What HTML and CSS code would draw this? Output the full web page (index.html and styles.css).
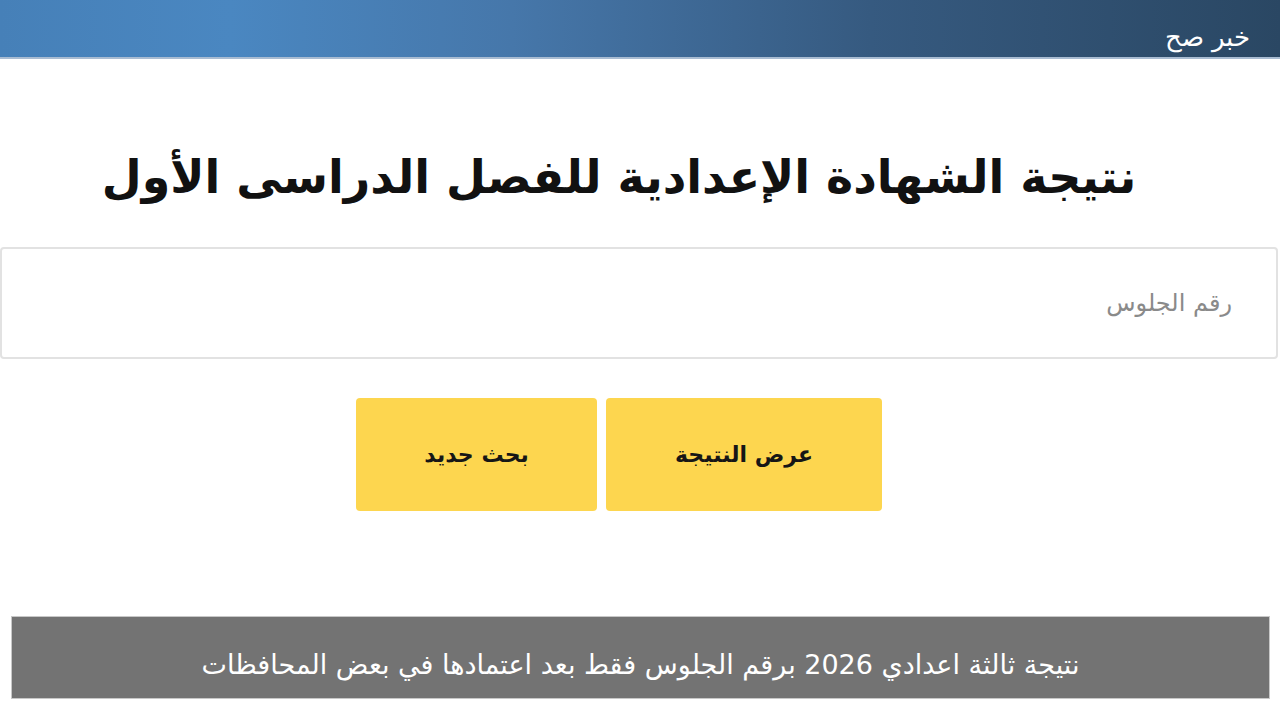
FILE: index.html
```html
<!DOCTYPE html>
<html lang="ar" dir="rtl">
<head>
  <meta charset="UTF-8">
  <meta name="viewport" content="width=device-width, initial-scale=1.0">
  <title>نتيجة الشهادة الإعدادية</title>
  <link rel="stylesheet" href="styles.css">
</head>
<body>
  <header class="topbar">
    <span class="brand">خبر صح</span>
  </header>

  <main class="result-page">
    <h1 class="page-title">نتيجة الشهادة الإعدادية للفصل الدراسى الأول</h1>

    <div class="seat-field">
      <input type="text" class="seat-input" placeholder="رقم الجلوس">
    </div>

    <div class="actions">
      <button class="btn">عرض النتيجة</button>
      <button class="btn btn-new">بحث جديد</button>
    </div>
  </main>

  <footer class="caption">
    <p>نتيجة ثالثة اعدادي 2026 برقم الجلوس فقط بعد اعتمادها في بعض المحافظات</p>
  </footer>
</body>
</html>
```

FILE: styles.css
```css
:root {
  --bar-left: #4a87c1;
  --bar-right: #2a4763;
  --btn-color: #fdd64f;
  --caption-bg: #737373;
}
body {
  margin: 0;
  background: #fff;
  font-family: "DejaVu Sans", "Noto Sans", sans-serif;
  color: #111;
}

/* الشريط العلوي */
.topbar {
  height: 57px;
  border-bottom: 2px solid #a9bcd2;
  background: linear-gradient(90deg, #4680b8 0%, var(--bar-left) 18%, #4677aa 40%, #365a80 68%, var(--bar-right) 100%);
  display: flex;
  align-items: center;
  padding-right: 30px;
  box-sizing: content-box;
}
.brand {
  color: #fff;
  font-size: 26px;
  font-weight: 300;
  margin-top: 16px;
}

/* المحتوى */
.result-page {
  display: flex;
  flex-direction: column;
}
.page-title {
  margin: 82px 42px 0 0;
  text-align: center;
  font-size: 46px;
  font-weight: bold;
  line-height: 72px;
  color: #111;
}
.seat-field {
  margin: 34px 2px 0 0;
}
.seat-input {
  width: 100%;
  box-sizing: border-box;
  height: 112px;
  border: 2px solid #e2e2e2;
  border-radius: 4px;
  padding: 0 44px 0 20px;
  font-family: inherit;
  font-size: 24px;
  direction: rtl;
  outline: none;
}
.seat-input::placeholder {
  color: #8a8a8a;
}
.actions {
  display: flex;
  justify-content: center;
  gap: 9px;
  margin: 39px 42px 0 0;
}
.btn {
  width: 276px;
  height: 113px;
  border: none;
  border-radius: 4px;
  background: var(--btn-color);
  font-family: inherit;
  font-size: 22px;
  font-weight: bold;
  color: #161616;
  cursor: pointer;
}
.btn-new {
  width: 241px;
}

/* الشريط السفلي */
.caption {
  margin: 105px 10px 0 11px;
  height: 81px;
  border: 1px solid #c8c8c8;
  background: var(--caption-bg);
  display: flex;
  align-items: center;
  justify-content: center;
}
.caption p {
  margin: 14px 0 0;
  color: #fff;
  font-size: 27px;
}
```
